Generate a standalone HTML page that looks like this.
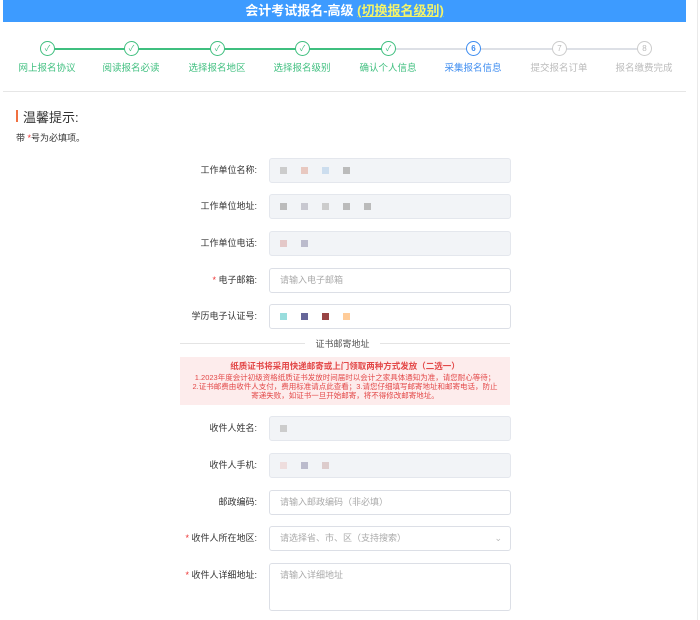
<!DOCTYPE html><html><head><meta charset="utf-8"><style>
body{margin:0;width:700px;height:620px;overflow:hidden;background:#fff;font-family:"Liberation Sans","Noto Sans CJK SC",sans-serif;position:relative}
.hd{position:absolute;left:3px;top:0;width:683px;height:22px;background:#3d9bff;color:#fff;font-size:13px;font-weight:bold;text-align:center;line-height:22px}
.hd u{color:#f4f46a}
.ln{position:absolute;top:48px;height:2px}
.c{position:absolute;top:41px;width:13px;height:13px;border-radius:50%;border:1px solid;background:#fff;font-size:8px;text-align:center;line-height:13px}
.lb{position:absolute;top:60px;width:90px;margin-left:-45px;text-align:center;font-size:9.5px}
.g{color:#3fbf7f;border-color:#3fbf7f}
.row{position:absolute;left:0;width:700px;height:25px}
.row .l{position:absolute;right:443px;top:0;line-height:25px;font-size:9px;color:#333}
.row .l i{color:#e33;font-style:normal}
.row .f{position:absolute;left:269px;top:0;width:240px;height:23px;border:1px solid #dcdfe6;border-radius:3px;background:#fff;font-size:9px;color:#aaa;line-height:23px;text-indent:10px;box-sizing:content-box}
.row .f.d{background:#f2f4f7;border-color:#e4e7ed}
.bl{display:inline-block;width:7px;height:7px;margin-right:14px;vertical-align:middle}
</style></head><body>
<div class="hd">会计考试报名-高级 <u>(切换报名级别)</u></div>
<div class="ln" style="left:47px;width:341px;background:#3fbf7f"></div>
<div class="ln" style="left:388px;width:256px;background:#dde0e6"></div>
<div class="c g" style="left:40px">✓</div><div class="c g" style="left:124px">✓</div><div class="c g" style="left:210px">✓</div><div class="c g" style="left:295px">✓</div><div class="c g" style="left:381px">✓</div>
<div class="c" style="left:466px;color:#3d8cf0;border-color:#3d8cf0;font-weight:bold">6</div>
<div class="c" style="left:552px;color:#bbb;border-color:#ccc">7</div>
<div class="c" style="left:637px;color:#bbb;border-color:#ccc">8</div>
<div class="lb" style="left:47px;color:#3fbf7f">网上报名协议</div>
<div class="lb" style="left:131px;color:#3fbf7f">阅读报名必读</div>
<div class="lb" style="left:217px;color:#3fbf7f">选择报名地区</div>
<div class="lb" style="left:302px;color:#3fbf7f">选择报名级别</div>
<div class="lb" style="left:388px;color:#3fbf7f">确认个人信息</div>
<div class="lb" style="left:473px;color:#3d8cf0">采集报名信息</div>
<div class="lb" style="left:559px;color:#bbb">提交报名订单</div>
<div class="lb" style="left:644px;color:#bbb">报名缴费完成</div>
<div style="position:absolute;left:3px;top:91px;width:683px;height:1px;background:#e6e6e6"></div>
<div style="position:absolute;left:16px;top:110px;width:2px;height:12px;background:#f07040"></div>
<div style="position:absolute;left:23px;top:107px;font-size:13px;color:#333">温馨提示:</div>
<div style="position:absolute;left:16px;top:131px;font-size:9px;color:#333">带 <span style="color:#e33">*</span>号为必填项。</div>
<div class="row" style="top:158px"><span class="l">工作单位名称:</span><div class="f d"><span class="bl" style="background:#ccc"></span><span class="bl" style="background:#e8c8c0"></span><span class="bl" style="background:#cde"></span><span class="bl" style="background:#bbb"></span></div></div>
<div class="row" style="top:194px"><span class="l">工作单位地址:</span><div class="f d"><span class="bl" style="background:#bbb"></span><span class="bl" style="background:#c8c8d0"></span><span class="bl" style="background:#ccc"></span><span class="bl" style="background:#bbb"></span><span class="bl" style="background:#bbb"></span></div></div>
<div class="row" style="top:231px"><span class="l">工作单位电话:</span><div class="f d"><span class="bl" style="background:#e4c8c8"></span><span class="bl" style="background:#bbc"></span></div></div>
<div class="row" style="top:268px"><span class="l"><i>*</i> 电子邮箱:</span><div class="f">请输入电子邮箱</div></div>
<div class="row" style="top:304px"><span class="l">学历电子认证号:</span><div class="f"><span class="bl" style="background:#9dd"></span><span class="bl" style="background:#669"></span><span class="bl" style="background:#944"></span><span class="bl" style="background:#fc9"></span></div></div>
<div style="position:absolute;left:180px;top:343px;width:125px;height:1px;background:#e4e4e4"></div>
<div style="position:absolute;left:380px;top:343px;width:130px;height:1px;background:#e4e4e4"></div>
<div style="position:absolute;left:305px;top:337px;width:75px;text-align:center;font-size:9px;color:#555">证书邮寄地址</div>
<div style="position:absolute;left:180px;top:357px;width:330px;height:48px;background:#fdecec;color:#e34848;text-align:center;font-size:7.5px;line-height:9px">
<div style="font-size:8.5px;font-weight:bold;margin:5px 0 2px">纸质证书将采用快递邮寄或上门领取两种方式发放（二选一）</div>
<div style="padding:0 12px">1.2023年度会计初级资格纸质证书发放时间届时以会计之家具体通知为准，请您耐心等待；2.证书邮费由收件人支付，费用标准请点此查看；3.请您仔细填写邮寄地址和邮寄电话，防止寄递失败，如证书一旦开始邮寄，将不得修改邮寄地址。</div></div>
<div class="row" style="top:416px"><span class="l">收件人姓名:</span><div class="f d"><span class="bl" style="background:#ccc"></span></div></div>
<div class="row" style="top:453px"><span class="l">收件人手机:</span><div class="f d"><span class="bl" style="background:#edd"></span><span class="bl" style="background:#bbc"></span><span class="bl" style="background:#dcc"></span></div></div>
<div class="row" style="top:490px"><span class="l">邮政编码:</span><div class="f">请输入邮政编码（非必填）</div></div>
<div class="row" style="top:526px"><span class="l"><i>*</i> 收件人所在地区:</span><div class="f">请选择省、市、区（支持搜索）<span style="position:absolute;right:8px;color:#bbb">⌄</span></div></div>
<div class="row" style="top:563px"><span class="l"><i>*</i> 收件人详细地址:</span><div class="f" style="height:46px;line-height:22px">请输入详细地址</div></div>
<div style="position:absolute;left:697px;top:0;width:1px;height:620px;background:#eaeaea"></div>
</body></html>
